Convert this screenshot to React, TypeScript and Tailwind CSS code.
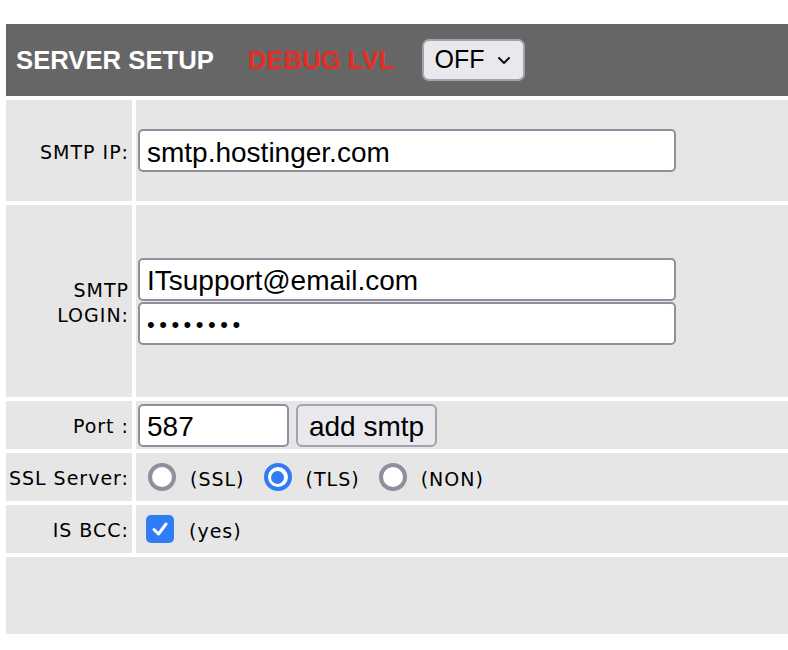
import React from "react";

const labelCls =
  "bg-[#e6e6e6] flex items-center justify-end pr-[3px] pt-[3px] text-right text-[19px] leading-[25px] tracking-[1px] text-black font-['DejaVu_Sans','Verdana',sans-serif]";
const valueCls = "bg-[#e6e6e6] flex items-center pl-[2px]";
const inputCls =
  "h-[43px] bg-white border-2 border-[#8f8f9d] rounded-[5px] px-[7px] pt-[4px] text-[28px] text-black font-['Liberation_Sans','Arial',sans-serif] outline-none";
const optText =
  "text-[19px] tracking-[1px] text-black font-['DejaVu_Sans','Verdana',sans-serif]";

function Radio({ checked }: { checked?: boolean }) {
  if (checked) {
    return (
      <span className="w-[28px] h-[28px] rounded-full border-[4px] border-[#2f7cf6] bg-white flex items-center justify-center shrink-0">
        <span className="w-[13px] h-[13px] rounded-full bg-[#2f7cf6]" />
      </span>
    );
  }
  return (
    <span className="w-[28px] h-[28px] rounded-full border-[4px] border-[#8f8f9d] bg-white shrink-0" />
  );
}

export default function App() {
  return (
    <div className="w-[788px] h-[650px] bg-white pt-[24px] pl-[6px]">
      <div className="w-[782px] grid grid-cols-[126px_1fr] gap-[4px]">
        {/* header */}
        <div className="col-span-2 h-[72px] bg-[#666666] flex items-center pl-[10px] font-['Liberation_Sans','Arial',sans-serif]">
          <span className="text-white font-bold text-[25.7px]">SERVER SETUP</span>
          <span className="ml-[34px] text-[#e62d22] font-bold text-[25.7px]">DEBUG LVL</span>
          <div className="ml-[28px] w-[103px] h-[42px] rounded-[7px] border-2 border-[#a3a3ad] bg-[#e9e9ed] flex items-center pl-[10px] pr-[10px] justify-between">
            <span className="text-[25px] text-black">OFF</span>
            <svg width="14" height="10" viewBox="0 0 14 10" className="mr-[2px]">
              <path d="M2 3 L7 8 L12 3" fill="none" stroke="#111" strokeWidth="2" strokeLinecap="round" strokeLinejoin="round" />
            </svg>
          </div>
        </div>

        {/* SMTP IP */}
        <div className={labelCls + " h-[101px]"}>SMTP IP:</div>
        <div className={valueCls + " h-[101px]"}>
          <input className={inputCls + " w-[538px]"} defaultValue="smtp.hostinger.com" readOnly />
        </div>

        {/* SMTP LOGIN */}
        <div className={labelCls + " h-[192px]"}>
          <span>
            SMTP
            <br />
            LOGIN:
          </span>
        </div>
        <div className={valueCls + " h-[192px] flex-col items-start justify-center gap-[1px]"}>
          <input className={inputCls + " w-[538px]"} defaultValue="ITsupport@email.com" readOnly />
          <input
            type="password"
            className={inputCls + " w-[538px] !text-[22px] tracking-[4.5px]"}
            defaultValue="12345678"
            readOnly
          />
        </div>

        {/* Port */}
        <div className={labelCls + " h-[48px]"}>Port :</div>
        <div className={valueCls + " h-[48px] gap-[7px]"}>
          <input className={inputCls + " w-[151px]"} defaultValue="587" readOnly />
          <button className="h-[43px] w-[141px] rounded-[6px] border-2 border-[#a3a3ad] bg-[#e9e9ed] pt-[3px] text-[28px] text-black font-['Liberation_Sans','Arial',sans-serif] flex items-center justify-center">
            add smtp
          </button>
        </div>

        {/* SSL */}
        <div className={labelCls + " h-[48px]"}>SSL Server:</div>
        <div className={valueCls + " h-[48px] pl-[12px]"}>
          <Radio />
          <span className={optText + " ml-[14px] mt-[5px]"}>(SSL)</span>
          <span className="ml-[19px] flex">
            <Radio checked />
          </span>
          <span className={optText + " ml-[14px] mt-[5px]"}>(TLS)</span>
          <span className="ml-[19px] flex">
            <Radio />
          </span>
          <span className={optText + " ml-[14px] mt-[5px]"}>(NON)</span>
        </div>

        {/* BCC */}
        <div className={labelCls + " h-[48px]"}>IS BCC:</div>
        <div className={valueCls + " h-[48px] pl-[10px]"}>
          <span className="w-[28px] h-[28px] rounded-[5px] bg-[#2f7cf6] flex items-center justify-center shrink-0">
            <svg width="20" height="20" viewBox="0 0 20 20">
              <path d="M4 10.5 L8.5 15 L16 5" fill="none" stroke="white" strokeWidth="3" strokeLinecap="round" strokeLinejoin="round" />
            </svg>
          </span>
          <span className={optText + " ml-[15px] mt-[5px]"}>(yes)</span>
        </div>

        {/* footer empty row */}
        <div className="col-span-2 h-[77px] bg-[#e6e6e6]" />
      </div>
    </div>
  );
}
